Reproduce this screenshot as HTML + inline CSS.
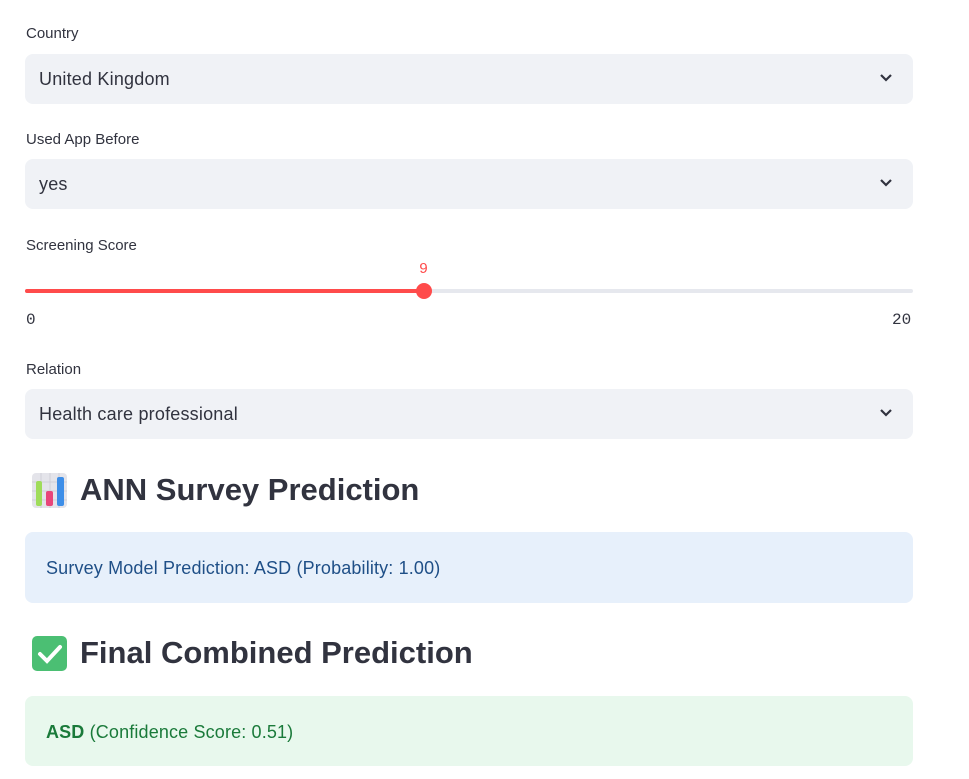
<!DOCTYPE html>
<html><head><style>
body{margin:0;background:#fff;font-family:"Liberation Sans",sans-serif;color:#31333f;width:969px;height:779px;overflow:hidden;position:relative}
.a{position:absolute}
.lbl{font-size:15px;left:26px}
.sel{left:25px;width:888px;height:50px;background:#f0f2f6;border-radius:8px}
.sel span{position:absolute;left:14px;top:15px;font-size:18px;letter-spacing:0.2px}
.sel svg{position:absolute;right:20px;top:19px}
h2{margin:0;font-size:31px;font-weight:bold;position:absolute;left:80px;letter-spacing:0px}
.mono{font-family:"Liberation Mono",monospace;font-size:16px}
</style></head><body>
<div class="a lbl" style="top:25px">Country</div>
<div class="a sel" style="top:54px"><span>United Kingdom</span><svg width="14" height="10" viewBox="0 0 14 10"><path d="M2 2l5 5 5-5" stroke="#31333f" stroke-width="2.2" fill="none"/></svg></div>
<div class="a lbl" style="top:131px">Used App Before</div>
<div class="a sel" style="top:159px"><span>yes</span><svg width="14" height="10" viewBox="0 0 14 10"><path d="M2 2l5 5 5-5" stroke="#31333f" stroke-width="2.2" fill="none"/></svg></div>
<div class="a lbl" style="top:237px">Screening Score</div>
<div class="a" style="left:419px;top:261px;font-size:15px;color:#ff4b4b;font-family:'Liberation Mono',monospace">9</div>
<div class="a" style="left:25px;top:289px;width:888px;height:4px;background:#e6e8ee;border-radius:2px"></div>
<div class="a" style="left:25px;top:289px;width:400px;height:4px;background:#ff4b4b;border-radius:2px"></div>
<div class="a" style="left:416px;top:283px;width:16px;height:16px;background:#ff4b4b;border-radius:50%"></div>
<div class="a mono" style="left:26px;top:311px">0</div>
<div class="a mono" style="left:892px;top:311px">20</div>
<div class="a lbl" style="top:361px">Relation</div>
<div class="a sel" style="top:389px"><span>Health care professional</span><svg width="14" height="10" viewBox="0 0 14 10"><path d="M2 2l5 5 5-5" stroke="#31333f" stroke-width="2.2" fill="none"/></svg></div>
<svg class="a" style="left:32px;top:473px" width="35" height="35" viewBox="0 0 35 35"><rect width="35" height="35" rx="4" fill="#e4e4ea"/><path d="M0 9h35M0 18h35M0 27h35M9 0v35M18 0v35M27 0v35" stroke="#cfcfd8"/><rect x="4" y="8" width="6" height="25" rx="2" fill="#9fdc5a"/><rect x="14" y="18" width="7" height="15" rx="2" fill="#e8457a"/><rect x="25" y="4" width="7" height="29" rx="2" fill="#3d8ee8"/></svg>
<h2 style="top:472px">ANN Survey Prediction</h2>
<div class="a" style="left:25px;top:532px;width:888px;height:71px;background:#e7f0fb;border-radius:8px"><span style="position:absolute;left:21px;top:26px;font-size:18px;letter-spacing:0.15px;color:#1f4f87">Survey Model Prediction: ASD (Probability: 1.00)</span></div>
<svg class="a" style="left:32px;top:636px" width="35" height="35" viewBox="0 0 35 35"><rect width="35" height="35" rx="5" fill="#4bbf73"/><path d="M8 18l7 7 13-14" stroke="#fff" stroke-width="4" fill="none" stroke-linecap="round"/></svg>
<h2 style="top:635px">Final Combined Prediction</h2>
<div class="a" style="left:25px;top:696px;width:888px;height:70px;background:#e8f8ed;border-radius:8px"><span style="position:absolute;left:21px;top:26px;font-size:18px;letter-spacing:0.15px;color:#1a7a3a"><b>ASD</b> (Confidence Score: 0.51)</span></div>
</body></html>
